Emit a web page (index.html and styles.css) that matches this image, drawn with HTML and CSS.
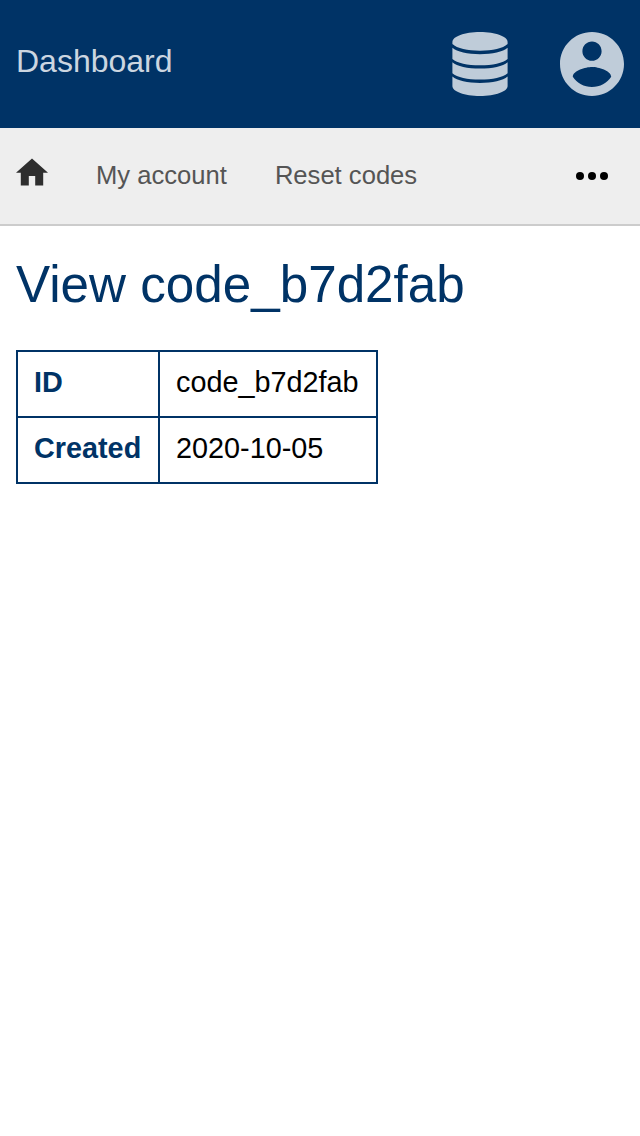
FILE: index.html
```html
<!DOCTYPE html>
<html lang="en">
<head>
<meta charset="utf-8">
<title>View code_b7d2fab</title>
<link rel="stylesheet" href="styles.css">
</head>
<body>
<header class="topbar">
  <span class="brand">Dashboard</span>
  <div class="tools">
    <svg class="database" width="56" height="64" viewBox="0 0 56 64"><path d="M.4 10C.4 4.500 12.500 0 28 0S55.600 4.500 55.600 10v2C51 16.500 40.500 18.700 28 18.700S5 16.500.4 12Z"/><path d="M.4 15.800C5 20 15.500 22.200 28 22.200s23-2.200 27.600-6.400v11.100C51 31 40.500 33.200 28 33.200S5 31 .4 26.900Z"/><path d="M.4 30.200C5 34.400 15.500 36.600 28 36.600s23-2.200 27.600-6.400v11.100C51 45.400 40.500 47.600 28 47.600S5 45.400.4 41.300Z"/><path d="M.4 44.600C5 48.800 15.500 51 28 51s23-2.200 27.600-6.400V54C55.600 59.500 43.500 64 28 64S.4 59.500.4 54Z"/></svg>
    <svg class="account" width="64" height="64" viewBox="2 2 20 20"><path d="M12 2C6.480 2 2 6.480 2 12s4.480 10 10 10 10-4.480 10-10S17.520 2 12 2zm0 3c1.660 0 3 1.340 3 3s-1.340 3-3 3-3-1.340-3-3 1.340-3 3-3zm0 14.200c-2.500 0-4.710-1.280-6-3.220.030-1.990 4-3.080 6-3.080 1.990 0 5.970 1.090 6 3.080-1.290 1.940-3.500 3.220-6 3.220z"/></svg>
  </div>
</header>
<nav class="subnav">
  <svg class="home" width="32" height="28" viewBox="2 3 20 17"><path d="M10 20v-6h4v6h5v-8h3L12 3 2 12h3v8z"/></svg>
  <span class="link">My account</span>
  <span class="link">Reset codes</span>
  <svg class="more" width="32" height="8" viewBox="0 0 32 8"><circle cx="4" cy="4" r="4"/><circle cx="16" cy="4" r="4"/><circle cx="28" cy="4" r="4"/></svg>
</nav>
<main class="content">
  <h1>View code_b7d2fab</h1>
  <table class="details">
    <tr><th>ID</th><td>code_b7d2fab</td></tr>
    <tr><th>Created</th><td>2020-10-05</td></tr>
  </table>
</main>
</body>
</html>
```
FILE: styles.css
```css
body { margin: 0; background: #fff; color: #000; font-family: "Liberation Sans", Arial, sans-serif; }
svg { display: block; }
.topbar { box-sizing: border-box; height: 128px; padding: 0 16px; display: flex; align-items: center; justify-content: space-between; background: #003366; color: #bfccd9; }
.brand { font-size: 32px; line-height: 36px; padding-bottom: 6px; color: #ccd6e0; }
.tools { display: flex; gap: 52px; fill: #bfccd9; }
.subnav { box-sizing: border-box; height: 98px; padding: 0 32px 0 16px; display: flex; align-items: center; gap: 48px; background: #eee; border-bottom: 2px solid #ccc; color: #555; font-size: 25.600px; }
.link { padding-bottom: 2px; }
.home { fill: #2e2e2e; margin-bottom: 8px; }
.more { margin-left: auto; }
.content { padding: 29px 16px; }
h1 { margin: 0; color: #003366; font-size: 51.200px; font-weight: 400; line-height: 60px; }
.details { width: 362px; table-layout: fixed; margin-top: 35px; border-collapse: collapse; font-size: 28.800px; line-height: 32px; }
.details th, .details td { box-sizing: border-box; border: 2px solid #003366; padding: 14px 16px 18px; text-align: left; white-space: nowrap; }
.details th { width: 142px; color: #003366; }
```
